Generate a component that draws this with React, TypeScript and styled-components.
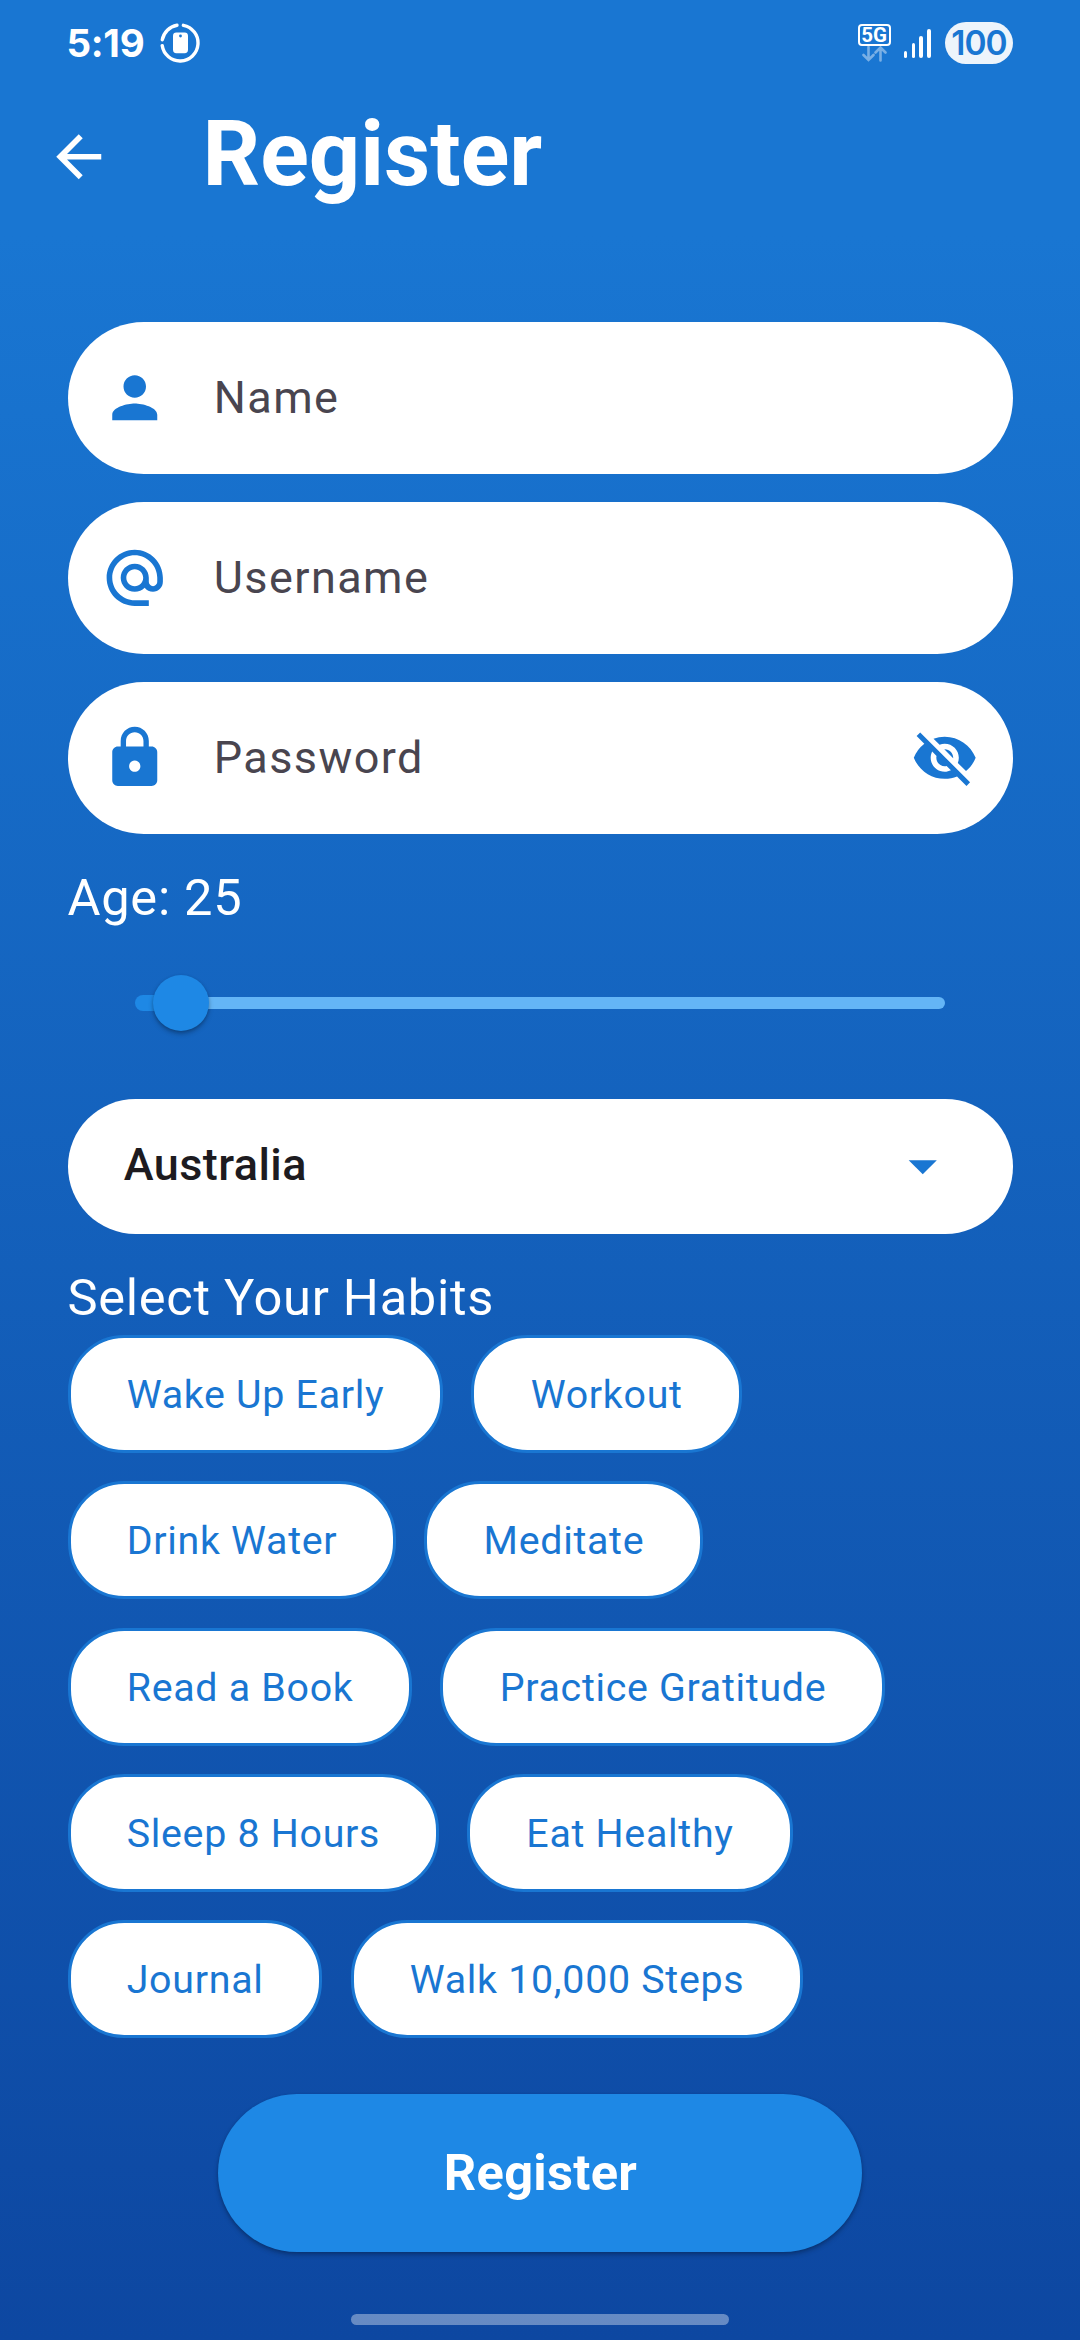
import React, { useState } from 'react';
import styled, { createGlobalStyle } from 'styled-components';
import {
  MdAlternateEmail,
  MdArrowBack,
  MdArrowDropDown,
  MdLock,
  MdPerson,
  MdVisibilityOff,
} from 'react-icons/md';

const GlobalStyle = createGlobalStyle`
  *, *::before, *::after { box-sizing: border-box; }
  body { margin: 0; background: #0d47a1; }
  button { font: inherit; border: 0; background: none; padding: 0; }
`;

const Screen = styled.div`
  display: flex;
  flex-direction: column;
  width: 1080px;
  height: 2340px;
  overflow: hidden;
  font-family: Roboto, "Liberation Sans", sans-serif;
  color: #fff;
  background: linear-gradient(to bottom, #1976d2 235px, #0d47a1 2340px);
`;

const StatusBar = styled.header`
  display: flex;
  align-items: center;
  justify-content: space-between;
  height: 77.6px;
  padding: 9px 67px 0 66.5px;
  font-family: Inter, "Open Sans", sans-serif;
`;

const StatusGroup = styled.div`
  display: flex;
  align-items: center;
`;

const Clock = styled.span`
  width: 93.5px;
  font-size: 38.5px;
  line-height: 40px;
  font-weight: 700;
  letter-spacing: -0.3px;
`;

const Network = styled.div`
  display: flex;
  flex-direction: column;
  align-items: center;
  width: 33px;
  height: 38px;
  margin: 0 13px 0 0;
`;

const NetworkLabel = styled.span`
  width: 33px;
  height: 22px;
  border: 2px solid #fff;
  border-radius: 4px;
  font-family: Roboto, sans-serif;
  font-size: 20.5px;
  line-height: 18px;
  font-weight: 700;
  text-align: center;
`;

const SignalBars = styled.div`
  display: flex;
  align-items: flex-end;
  gap: 4.2px;
  height: 29px;
  margin-right: 14px;
`;

const SignalBar = styled.i<{ $height: number }>`
  width: 3.7px;
  height: ${(p) => p.$height}px;
  border-radius: 2px;
  background: #fff;
`;

const Battery = styled.span`
  width: 68px;
  height: 42px;
  border-radius: 21px;
  background: #edf4fb;
  color: #1976d2;
  font-size: 33.5px;
  line-height: 42px;
  font-weight: 600;
  text-align: center;
  letter-spacing: -1px;
`;

const AppBar = styled.div`
  display: flex;
  align-items: center;
  height: 157.5px;
  padding-left: 45px;
`;

const BackButton = styled.button`
  display: flex;
  color: #fff;
  font-size: 67.5px;
`;

const Title = styled.h1`
  margin: 0 0 2px 90px;
  font-size: 90px;
  line-height: 1.2;
  font-weight: 700;
`;

const Form = styled.form`
  display: flex;
  flex-direction: column;
  padding: 87.2px 67.5px 0;
`;

const Field = styled.label`
  display: flex;
  align-items: center;
  height: 151.875px;
  margin-bottom: 28.125px;
  padding: 0 33.75px;
  border-radius: 84.375px;
  background: #fff;
  color: #1976d2;
  font-size: 67.5px;
`;

const FieldText = styled.span`
  flex: 1;
  margin: 0 0 0.8px 45px;
  color: #49454f;
  font-size: 45px;
  line-height: 68px;
  letter-spacing: 1.406px;
`;

const SectionLabel = styled.div`
  height: 73.2px;
  font-size: 50.625px;
  line-height: 72.6px;
  letter-spacing: 0.703px;
`;

const Slider = styled.div`
  display: flex;
  align-items: center;
  height: 135px;
  margin-bottom: 28.125px;
  padding: 0 67.5px;
`;

const ActiveTrack = styled.div`
  width: 46px;
  height: 16.875px;
  border-radius: 8.5px 0 0 8.5px;
  background: #1e88e5;
`;

const InactiveTrack = styled.div`
  flex: 1;
  height: 12px;
  border-radius: 0 6px 6px 0;
  background: #64b5f6;
`;

const Thumb = styled.div`
  position: relative;
  width: 56.25px;
  height: 56.25px;
  margin: 0 -28.125px;
  border-radius: 50%;
  background: #1e88e5;
  box-shadow: 0 3px 5px rgba(0, 0, 0, 0.26), 0 1px 3px rgba(0, 0, 0, 0.14);
`;

const Select = styled.div`
  display: flex;
  align-items: center;
  justify-content: space-between;
  height: 135.2px;
  margin-bottom: 28.125px;
  padding: 0 56.25px;
  border-radius: 84.375px;
  background: #fff;
  color: #1976d2;
  font-size: 67.5px;
`;

const SelectValue = styled.span`
  margin-bottom: 2.6px;
  color: #1d1b20;
  font-size: 45px;
  line-height: 68px;
  font-weight: 500;
  letter-spacing: 0.42px;
`;

const Chips = styled.div`
  display: flex;
  flex-wrap: wrap;
  gap: 28.125px;
`;

const Chip = styled.button<{ $selected: boolean }>`
  height: 118.125px;
  padding: 1.8px 55.9px 0 56.2px;
  border: 3px solid #1976d2;
  border-radius: 56.25px;
  background: ${(p) => (p.$selected ? '#bbdefb' : '#fff')};
  color: #1976d2;
  font-size: 39.375px;
  line-height: 56px;
  letter-spacing: 0.703px;
  white-space: nowrap;
`;

const SubmitButton = styled.button`
  align-self: center;
  width: 643.5px;
  height: 157.5px;
  margin-top: 56.25px;
  padding: 0 0 1px 1px;
  border-radius: 84.375px;
  background: #1e88e5;
  color: #fff;
  font-size: 50.625px;
  font-weight: 700;
  letter-spacing: 0.28px;
  box-shadow: 0 3px 5px rgba(0, 0, 0, 0.24), 0 1px 3px rgba(0, 0, 0, 0.12);
`;

const HomeIndicator = styled.div`
  align-self: center;
  width: 378px;
  height: 11px;
  margin: auto 0 15px;
  border-radius: 5.5px;
  background: rgba(255, 255, 255, 0.37);
`;

const HABITS = [
  'Wake Up Early',
  'Workout',
  'Drink Water',
  'Meditate',
  'Read a Book',
  'Practice Gratitude',
  'Sleep 8 Hours',
  'Eat Healthy',
  'Journal',
  'Walk 10,000 Steps',
];

function PhoneRing() {
  return (
    <svg width="40" height="40" viewBox="0 0 40 40" fill="none">
      <path
        d="M23.4 2.3 A18 18 0 1 1 2.2 22.6"
        stroke="#fff"
        strokeWidth="3.4"
        strokeLinecap="round"
      />
      <path d="M2.3 16.8 A18 18 0 0 1 17 2.2" stroke="#fff" strokeWidth="3.4" strokeLinecap="round" />
      <rect x="13" y="9.4" width="15" height="20.8" rx="3.4" fill="#fff" />
      <circle cx="20.5" cy="13" r="1.4" fill="#1976d2" />
    </svg>
  );
}

function DataArrows() {
  return (
    <svg width="25" height="16" viewBox="0 0 25 16" fill="none">
      <path
        d="M6.5 1v12.5M1.5 9l5 5 5-5M18.5 14.5V2M13.5 6.5l5-5 5 5"
        stroke="#fff"
        strokeOpacity="0.42"
        strokeWidth="2.6"
        strokeLinecap="round"
      />
    </svg>
  );
}

export default function App() {
  const [selected, setSelected] = useState<string[]>([]);
  const toggle = (habit: string) =>
    setSelected((s) => (s.includes(habit) ? s.filter((h) => h !== habit) : [...s, habit]));

  return (
    <>
      <GlobalStyle />
      <Screen>
        <StatusBar>
          <StatusGroup>
            <Clock>5:19</Clock>
            <PhoneRing />
          </StatusGroup>
          <StatusGroup>
            <Network>
              <NetworkLabel>5G</NetworkLabel>
              <DataArrows />
            </Network>
            <SignalBars>
              {[7, 15, 22, 29].map((h) => (
                <SignalBar key={h} $height={h} />
              ))}
            </SignalBars>
            <Battery>100</Battery>
          </StatusGroup>
        </StatusBar>
        <AppBar>
          <BackButton type="button" aria-label="Back">
            <MdArrowBack />
          </BackButton>
          <Title>Register</Title>
        </AppBar>
        <Form>
          <Field>
            <MdPerson />
            <FieldText>Name</FieldText>
          </Field>
          <Field>
            <MdAlternateEmail />
            <FieldText>Username</FieldText>
          </Field>
          <Field>
            <MdLock />
            <FieldText>Password</FieldText>
            <MdVisibilityOff />
          </Field>
          <SectionLabel>Age: 25</SectionLabel>
          <Slider>
            <ActiveTrack />
            <Thumb />
            <InactiveTrack />
          </Slider>
          <Select>
            <SelectValue>Australia</SelectValue>
            <MdArrowDropDown />
          </Select>
          <SectionLabel>Select Your Habits</SectionLabel>
          <Chips>
            {HABITS.map((habit) => (
              <Chip
                key={habit}
                type="button"
                $selected={selected.includes(habit)}
                onClick={() => toggle(habit)}
              >
                {habit}
              </Chip>
            ))}
          </Chips>
          <SubmitButton type="button">Register</SubmitButton>
        </Form>
        <HomeIndicator />
      </Screen>
    </>
  );
}
